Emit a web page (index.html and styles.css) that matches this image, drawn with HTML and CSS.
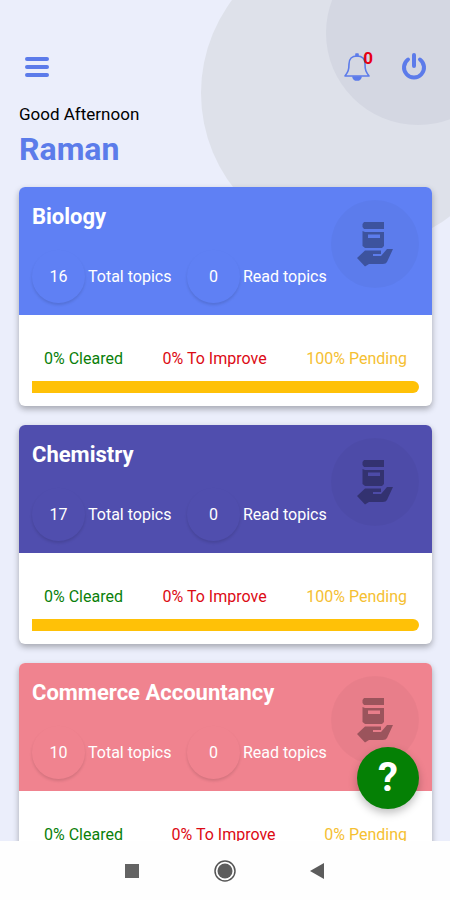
FILE: index.html
```html
<!DOCTYPE html>
<html lang="en">
<head>
<meta charset="utf-8">
<meta name="viewport" content="width=device-width, initial-scale=1">
<title>Subjects</title>
<link rel="stylesheet" href="styles.css">
</head>
<body>
<svg width="0" height="0" class="defs" aria-hidden="true">
  <symbol id="book-hand" viewBox="0 0 36 46">
    <path d="M7 1H27V8H7L5.500 6V3Z"/>
    <path fill-rule="evenodd" d="M5.500 10L8 11H27V25L25 27H8L5.500 25ZM11 13.500V17H23V13.500Z"/>
    <path d="M0 37L8 29.500H24V33H16V35H24L30 28H36L30 41Q29 43 26 43H12L8 45.500Z"/>
  </symbol>
</svg>
<div class="screen">
  <main class="content">
    <div class="bubble bubble-large"></div>
    <div class="bubble bubble-small"></div>
    <header class="topbar">
      <button class="icon-button" aria-label="Menu">
        <svg width="26" height="26" viewBox="0 0 26 26"><path d="M3 5H23M3 13H23M3 21H23" stroke="currentColor" stroke-width="4" stroke-linecap="round"/></svg>
      </button>
      <div class="actions">
        <button class="icon-button" aria-label="Notifications">
          <svg width="28" height="30" viewBox="0 0 28 30" fill="none" stroke="currentColor" stroke-width="1.600" stroke-linejoin="round"><path d="M2 24C5 20 6 18 6 12C6 7 9 4 14 4C19 4 22 7 22 12C22 18 23 20 26 24Z"/><path d="M13 4V2H15V4Z" fill="currentColor"/><path d="M10 25H18C17 29 11 29 10 25Z" fill="currentColor"/></svg>
          <span class="badge">0</span>
        </button>
        <button class="icon-button" aria-label="Log out">
          <svg width="26" height="28" viewBox="0 0 26 28" fill="none" stroke="currentColor" stroke-width="4" stroke-linecap="round"><path d="M7 6.500A10 10 0 1 0 19 6.500M13 2V13"/></svg>
        </button>
      </div>
    </header>
    <p class="greeting">Good Afternoon</p>
    <h1 class="name">Raman</h1>
    <div class="cards">
      <article class="card biology">
        <div class="card-head">
          <h2>Biology</h2>
          <div class="stats"><span class="count">16</span><span class="label">Total topics</span><span class="count">0</span><span class="label">Read topics</span></div>
          <div class="emblem"><svg width="36" height="46"><use href="#book-hand"/></svg></div>
        </div>
        <div class="card-body">
          <div class="results"><span class="cleared">0% Cleared</span><span class="improve">0% To Improve</span><span class="pending">100% Pending</span></div>
          <div class="bar"></div>
        </div>
      </article>
      <article class="card chemistry">
        <div class="card-head">
          <h2>Chemistry</h2>
          <div class="stats"><span class="count">17</span><span class="label">Total topics</span><span class="count">0</span><span class="label">Read topics</span></div>
          <div class="emblem"><svg width="36" height="46"><use href="#book-hand"/></svg></div>
        </div>
        <div class="card-body">
          <div class="results"><span class="cleared">0% Cleared</span><span class="improve">0% To Improve</span><span class="pending">100% Pending</span></div>
          <div class="bar"></div>
        </div>
      </article>
      <article class="card commerce">
        <div class="card-head">
          <h2>Commerce Accountancy</h2>
          <div class="stats"><span class="count">10</span><span class="label">Total topics</span><span class="count">0</span><span class="label">Read topics</span></div>
          <div class="emblem"><svg width="36" height="46"><use href="#book-hand"/></svg></div>
        </div>
        <div class="card-body">
          <div class="results"><span class="cleared">0% Cleared</span><span class="improve">0% To Improve</span><span class="pending">0% Pending</span></div>
        </div>
      </article>
    </div>
    <button class="help" aria-label="Help">?</button>
  </main>
  <nav class="navbar">
    <button aria-label="Recent apps"><svg width="24" height="24"><rect x="5" y="5" width="14" height="14" fill="#636363"/></svg></button>
    <button aria-label="Home"><svg width="24" height="24"><circle cx="12" cy="12" r="10" fill="none" stroke="#555" stroke-width="1.500"/><circle cx="12" cy="12" r="7.500" fill="#5c5c5c"/></svg></button>
    <button aria-label="Back"><svg width="24" height="24"><path d="M4 12L18 4V20Z" fill="#5c5c5c"/></svg></button>
  </nav>
</div>
</body>
</html>
```
FILE: styles.css
```css
* { box-sizing: border-box; }
body { margin: 0; font-family: Roboto, "Liberation Sans", sans-serif; font-size: 17px; line-height: 20px; color: #111; }
h1, h2, p { margin: 0; }
button { border: 0; padding: 0; background: none; font: inherit; color: inherit; display: flex; align-items: center; justify-content: center; }
svg { display: block; }
.defs { position: absolute; }

.screen { display: flex; flex-direction: column; height: 100vh; }
.content { position: relative; flex: 1; min-height: 0; overflow: hidden; padding: 48px 18px 0 19px; background: #ebeefb; isolation: isolate; }

.bubble { position: absolute; z-index: -1; border-radius: 50%; }
.bubble-large { width: 310px; height: 310px; top: -62px; right: -61px; background: #dee1ea; }
.bubble-small { width: 184px; height: 184px; top: -59px; right: -60px; background: #d4d7e2; }

.topbar { display: flex; justify-content: space-between; align-items: center; height: 38px; padding: 0 5px; color: #5c7bea; }
.actions { display: flex; align-items: center; gap: 30px; }
.icon-button { position: relative; }
.badge { position: absolute; top: -4px; right: -2px; font-size: 17px; font-weight: 700; color: #e60012; }

.greeting { margin-top: 18px; color: #000; }
.name { margin-top: 5px; font-size: 32px; line-height: 40px; color: #5b7cea; }

.cards { display: flex; flex-direction: column; gap: 19px; margin-top: 18px; }
.card { flex: none; border-radius: 6px; background: #fff; box-shadow: 0 3px 6px rgba(0, 0, 0, .3); }
.card-head { position: relative; height: 128px; padding: 16px 13px; border-radius: 6px 6px 0 0; color: #fff; }
.card-head h2 { font-size: 22px; line-height: 28px; }
.biology .card-head { background: #5f80f4; }
.chemistry .card-head { background: #504eae; }
.commerce .card-head { background: #f0838f; }

.stats { display: flex; align-items: center; margin-top: 19px; font-size: 16px; }
.count { display: flex; align-items: center; justify-content: center; width: 53px; height: 53px; border-radius: 50%; box-shadow: 0 2px 3px rgba(0, 0, 0, .12); }
.label { width: 99px; margin-left: 3px; }

.emblem { position: absolute; top: 13px; right: 13px; display: flex; align-items: center; justify-content: center; width: 88px; height: 88px; border-radius: 50%; background: rgba(0, 0, 0, .03); }
.emblem svg { fill: rgba(0, 0, 0, .33); }

.card-body { height: 91px; padding: 34px 13px 0; font-size: 16px; }
.results { display: flex; justify-content: space-between; padding: 0 12px; }
.cleared { color: #0a800a; }
.improve { color: #dc0a14; }
.pending { color: #f5c032; }
.bar { height: 12px; margin-top: 12px; border-radius: 0 6px 6px 0; background: #ffc107; }

.help { position: absolute; right: 31px; bottom: 32px; width: 62px; height: 62px; border-radius: 50%; background: #058005; color: #fff; font-size: 40px; font-weight: 700; box-shadow: 0 4px 8px rgba(0, 0, 0, .25); }

.navbar { display: flex; align-items: center; justify-content: center; gap: 69px; height: 59px; background: #fefefe; }
```
